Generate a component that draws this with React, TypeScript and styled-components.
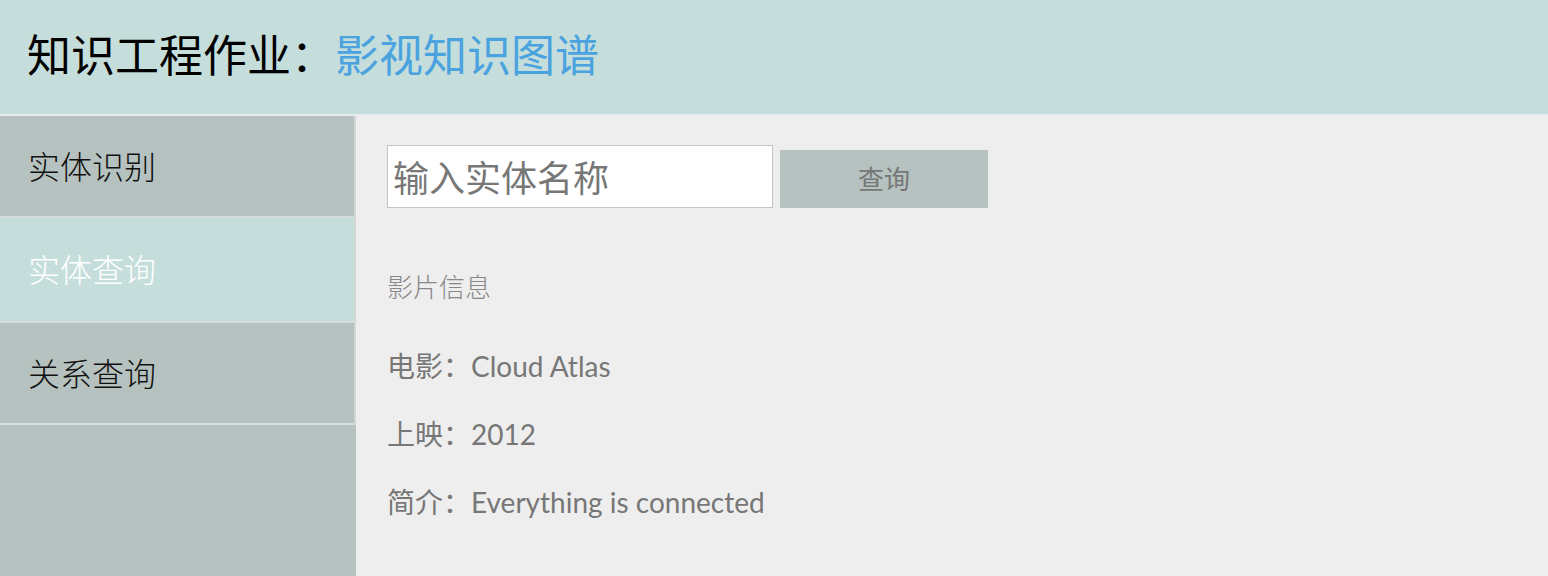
import styled, { createGlobalStyle } from 'styled-components'

const GlobalStyle = createGlobalStyle`
  html, body {
    margin: 0;
    padding: 0;
    background: #eeeeee;
    font-family: Lato, "Noto Sans CJK SC", sans-serif;
  }
`

const menu = ['实体识别', '实体查询', '关系查询']

const info = [
  { label: '电影', value: 'Cloud Atlas' },
  { label: '上映', value: '2012' },
  { label: '简介', value: 'Everything is connected' }
]

export default function App() {
  return (
    <>
      <GlobalStyle />
      <Page>
        <Header>
          <Title>
            知识工程作业：<span>影视知识图谱</span>
          </Title>
        </Header>
        <Body>
          <Sidebar>
            {menu.map((item, i) => (
              <MenuItem key={item} $active={i === 1}>
                {item}
              </MenuItem>
            ))}
          </Sidebar>
          <Content>
            <SearchRow>
              <SearchInput placeholder="输入实体名称" />
              <SearchButton type="button">查询</SearchButton>
            </SearchRow>
            <SectionTitle>影片信息</SectionTitle>
            {info.map((row) => (
              <InfoRow key={row.label}>
                {row.label}：<span>{row.value}</span>
              </InfoRow>
            ))}
          </Content>
        </Body>
      </Page>
    </>
  )
}

const Page = styled.div`
  display: flex;
  flex-direction: column;
  height: 576px;
  overflow: hidden;
`

const Header = styled.header`
  height: 114px;
  flex-shrink: 0;
  display: flex;
  align-items: center;
  padding-left: 27px;
  background: #c5dedb;
  border-bottom: 2px solid #e6eceb;
`

const Title = styled.h1`
  margin: 0;
  font-family: "Noto Sans CJK SC", sans-serif;
  font-size: 44px;
  font-weight: 400;
  color: #000;
  line-height: 1;
  padding-bottom: 8px;

  span {
    color: #4aa3df;
  }
`

const Body = styled.div`
  flex: 1;
  display: flex;
`

const Sidebar = styled.nav`
  width: 356px;
  flex-shrink: 0;
  background: #b5c2bf;
  display: flex;
  flex-direction: column;
`

const MenuItem = styled.div<{ $active?: boolean }>`
  height: ${(p) => (p.$active ? '100px' : '97px')};
  display: flex;
  align-items: center;
  padding: 0 0 3px 28px;
  font-family: "Noto Sans CJK SC", sans-serif;
  font-size: 32px;
  font-weight: 300;
  color: ${(p) => (p.$active ? '#ffffff' : '#111111')};
  background: ${(p) => (p.$active ? '#c5dedb' : '#b5c2bf')};
  border-right: 2px solid #d2d6d5;
  border-bottom: 2px solid #d6dcdb;
`

const Content = styled.main`
  flex: 1;
  background: #eeeeee;
  padding: 29px 0 0 31px;
`

const SearchRow = styled.div`
  display: flex;
  align-items: flex-end;
  gap: 7px;
`

const SearchInput = styled.input`
  width: 386px;
  height: 63px;
  box-sizing: border-box;
  border: 1px solid #c4c4c4;
  background: #fff;
  padding: 0 5px 2px;
  font-family: "Noto Sans CJK SC", sans-serif;
  font-size: 36px;
  outline: none;

  &::placeholder {
    color: #777;
  }
`

const SearchButton = styled.button`
  width: 208px;
  height: 58px;
  border: none;
  background: #b5c2bf;
  color: #777;
  font-family: "Noto Sans CJK SC", sans-serif;
  font-size: 26px;
  padding-bottom: 4px;
  cursor: pointer;
`

const SectionTitle = styled.div`
  margin-top: 58px;
  font-family: "Noto Sans CJK SC", sans-serif;
  font-size: 26px;
  font-weight: 300;
  color: #888;
  height: 40px;
  line-height: 40px;
`

const InfoRow = styled.div`
  margin-top: 45px;
  height: 30px;
  line-height: 30px;
  font-size: 28px;
  color: #777;
  font-family: Lato, "Noto Sans CJK SC", sans-serif;

  & + & {
    margin-top: 38px;
  }
`
